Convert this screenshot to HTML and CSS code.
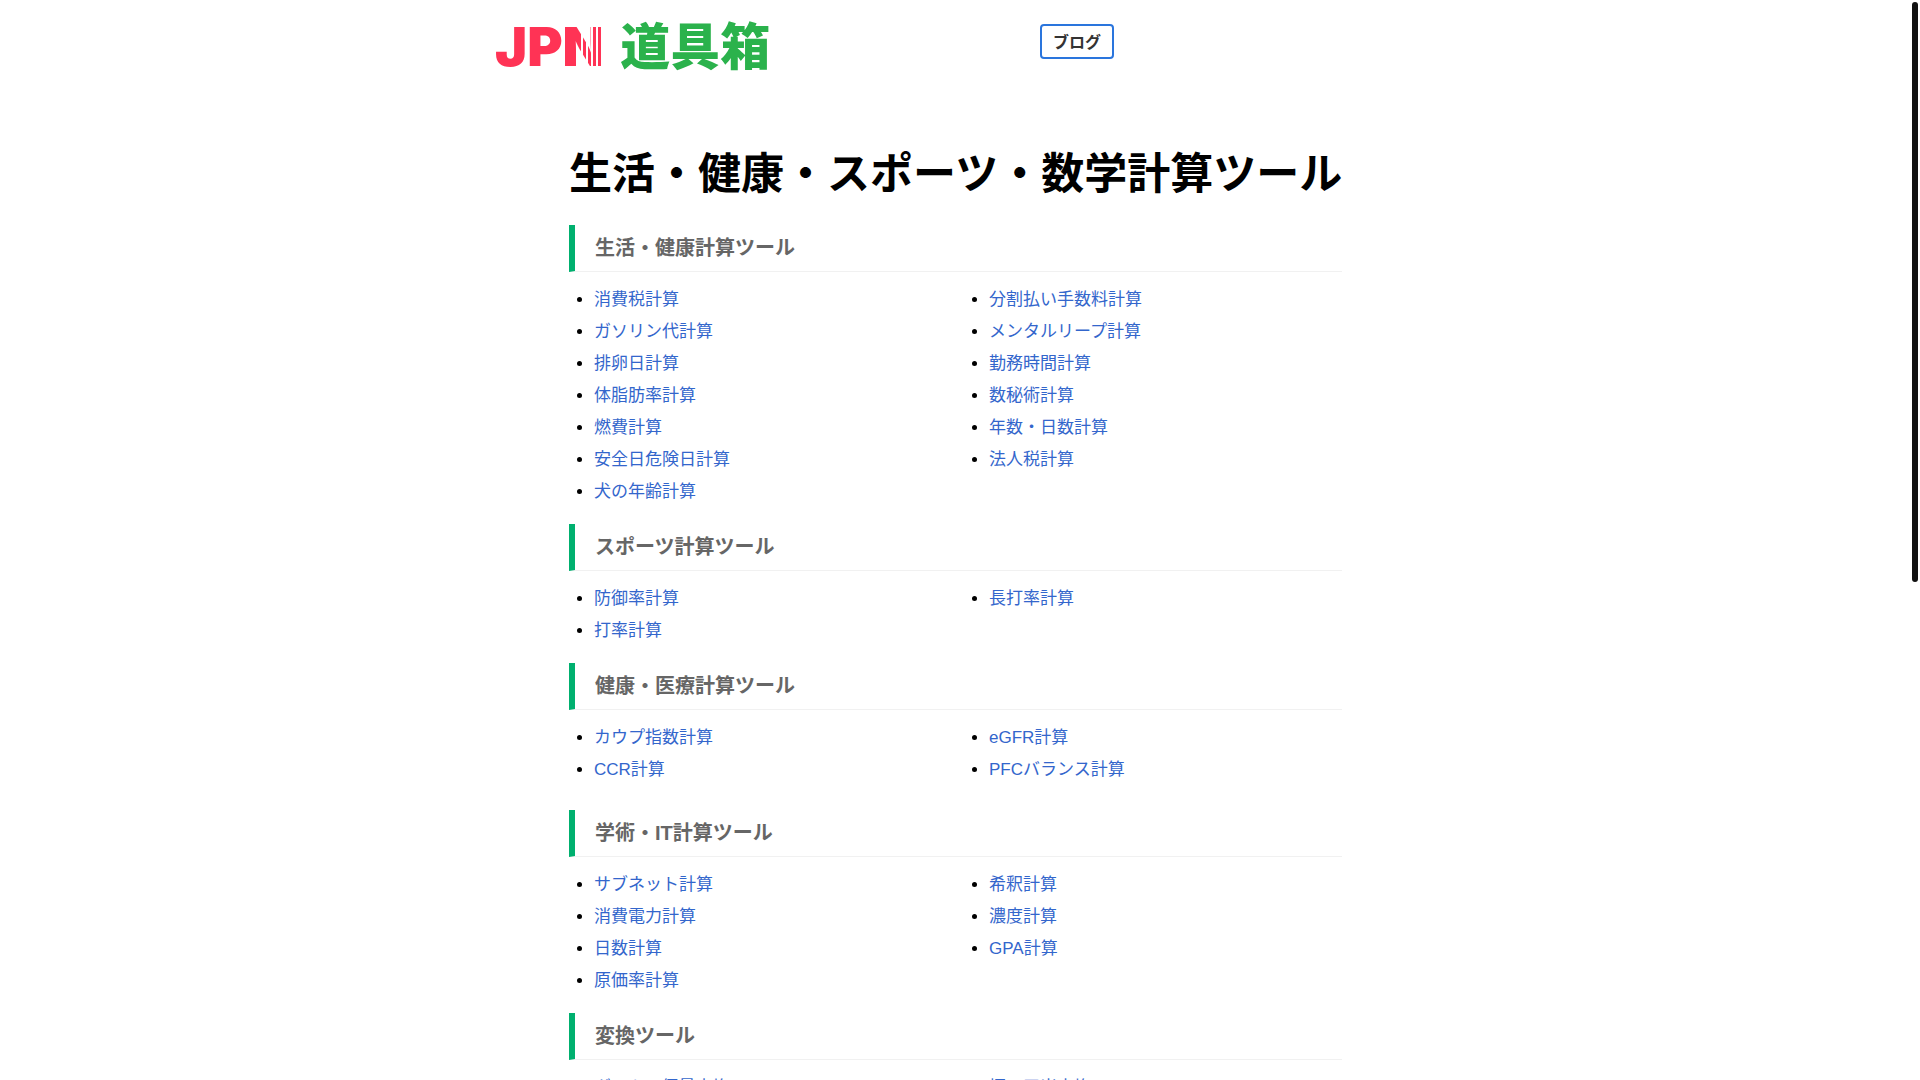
FILE: index.html
```html
<!DOCTYPE html>
<html lang="ja">
<head>
  <meta charset="UTF-8" />
  <meta name="viewport" content="width=device-width, initial-scale=1.0"/>
  <title>JPN 道具箱</title>
  <link rel="stylesheet" href="styles.css">
</head>
<body>
  <header class="header">
    <a href="#" class="logo"><span class="logo-jpn">JP<span class="logo-n">N</span></span><span class="logo-box">道具箱</span></a>
    <nav>
      <a href="#" class="nav-btn">ブログ</a>
    </nav>
  </header>

  <main class="container">
    <h1>生活・健康・スポーツ・数学計算ツール</h1>

    <h2>生活・健康計算ツール</h2>
    <ul class="tool-list">
      <li><a href="#">消費税計算</a></li>
      <li><a href="#">ガソリン代計算</a></li>
      <li><a href="#">排卵日計算</a></li>
      <li><a href="#">体脂肪率計算</a></li>
      <li><a href="#">燃費計算</a></li>
      <li><a href="#">安全日危険日計算</a></li>
      <li><a href="#">犬の年齢計算</a></li>
      <li><a href="#">分割払い手数料計算</a></li>
      <li><a href="#">メンタルリープ計算</a></li>
      <li><a href="#">勤務時間計算</a></li>
      <li><a href="#">数秘術計算</a></li>
      <li><a href="#">年数・日数計算</a></li>
      <li><a href="#">法人税計算</a></li>
    </ul>

    <h2>スポーツ計算ツール</h2>
    <ul class="tool-list">
      <li><a href="#">防御率計算</a></li>
      <li><a href="#">打率計算</a></li>
      <li><a href="#">長打率計算</a></li>
    </ul>

    <h2>健康・医療計算ツール</h2>
    <ul class="tool-list spaced">
      <li><a href="#">カウプ指数計算</a></li>
      <li><a href="#">CCR計算</a></li>
      <li><a href="#">eGFR計算</a></li>
      <li><a href="#">PFCバランス計算</a></li>
    </ul>

    <h2>学術・IT計算ツール</h2>
    <ul class="tool-list">
      <li><a href="#">サブネット計算</a></li>
      <li><a href="#">消費電力計算</a></li>
      <li><a href="#">日数計算</a></li>
      <li><a href="#">原価率計算</a></li>
      <li><a href="#">希釈計算</a></li>
      <li><a href="#">濃度計算</a></li>
      <li><a href="#">GPA計算</a></li>
    </ul>

    <h2>変換ツール</h2>
    <ul class="tool-list">
      <li><a href="#">グラム・個量変換</a></li>
      <li><a href="#">坪・平米変換</a></li>
    </ul>
  </main>

  <div class="scroll-thumb"></div>
</body>
</html>
```
FILE: styles.css
```css
* { box-sizing: border-box; }
html { overflow: hidden; }
body {
  margin: 0;
  padding-right: 9px;
  background-color: #fff;
  color: #000;
  font-family: "Liberation Sans", "Noto Sans CJK JP", sans-serif;
  font-size: 17px;
  line-height: 32px;
}
a { color: #3366cc; text-decoration: none; }

.header {
  display: grid;
  grid-template-columns: 545px 1fr;
  align-items: start;
  max-width: 921px;
  margin: 0 auto;
  padding-top: 24px;
}
.logo {
  display: flex;
  align-items: center;
  gap: 16px;
  height: 46px;
  white-space: nowrap;
}
.logo-jpn {
  color: #ff3355;
  font-family: Inter, "Liberation Sans", sans-serif;
  font-size: 54px;
  font-weight: 900;
}
/* solid left stem, striped diagonal and right stem */
.logo-n {
  background: linear-gradient(90deg, #ff3355 0 15px, transparent 15px), repeating-linear-gradient(90deg, #ff3355 0 3px, #fff 3px 5px);
  background-clip: text;
  -webkit-background-clip: text;
  color: transparent;
}
.logo-box {
  color: #2bb24c;
  font-family: "Noto Sans CJK JP", sans-serif;
  font-size: 50px;
  font-weight: 900;
  line-height: 40px;
  padding-bottom: 8px;
}
.nav-btn {
  display: inline-block;
  padding: 2px 11px 0;
  border: 2px solid #2a75dd;
  border-radius: 4px;
  color: #333;
  font-size: 16px;
  font-weight: bold;
  line-height: 29px;
}

.container { max-width: 773px; margin: 0 auto; padding-top: 75px; }
h1 { margin: 0 0 22px; font-size: 43px; line-height: 58px; white-space: nowrap; }
h2 {
  margin: 0;
  padding: 0 20px;
  border-left: 6px solid #00b06f;
  border-bottom: 1px solid #f1f1f1;
  color: #666;
  font-size: 20px;
  line-height: 46px;
}
.tool-list {
  columns: 2;
  column-gap: 17px;
  margin: 12px 0 16px;
  padding: 0;
}
.tool-list li { margin-left: 25px; }
.spaced { margin-bottom: 24px; }

/* custom scrollbar */
.scroll-thumb {
  position: absolute;
  top: 2px;
  right: 2px;
  width: 6px;
  height: 580px;
  border-radius: 3px;
  background-color: #111;
}
```
